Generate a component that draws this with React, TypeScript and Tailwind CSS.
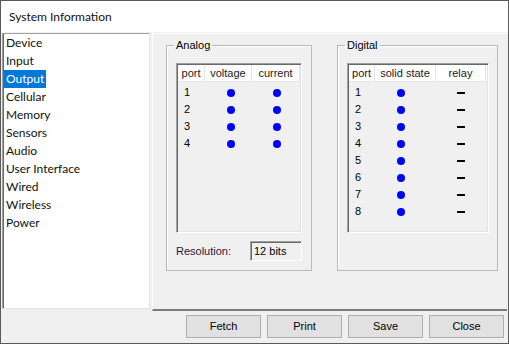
const MENU = [
  "Device",
  "Input",
  "Output",
  "Cellular",
  "Memory",
  "Sensors",
  "Audio",
  "User Interface",
  "Wired",
  "Wireless",
  "Power",
];

const ANALOG = [1, 2, 3, 4];
const DIGITAL = [1, 2, 3, 4, 5, 6, 7, 8];

function Dot() {
  return <span className="block h-[8px] w-[8px] rounded-full bg-[#0000ff]" />;
}

function Dash() {
  return <span className="block h-[2px] w-[8px] bg-black" />;
}

function HeaderCell({ label, width }: { label: string; width: string }) {
  return (
    <div
      className={`${width} flex h-full items-center justify-center border-r border-[#e5e5e5] text-[#1a1a1a]`}
    >
      {label}
    </div>
  );
}

function ListView({
  width,
  columns,
  rows,
  relayDash,
}: {
  width: string;
  columns: { label: string; width: string }[];
  rows: number[];
  relayDash?: boolean;
}) {
  return (
    <div
      className={`${width} h-[170px] border border-t-[#a0a0a0] border-l-[#a0a0a0] border-r-white border-b-white bg-[#f0f0f0] p-[1px] shadow-[inset_1px_1px_0_#696969,inset_-1px_-1px_0_#e3e3e3]`}
    >
      <div className="flex h-[17px] border-b border-[#e5e5e5] bg-white">
        {columns.map((c) => (
          <HeaderCell key={c.label} label={c.label} width={c.width} />
        ))}
      </div>
      <div className="pt-[2px]">
        {rows.map((n) => (
          <div key={n} className="flex h-[17px] items-center">
            <div className={`${columns[0].width} pl-[6px]`}>{n}</div>
            <div className={`${columns[1].width} pl-[22px]`}>
              <Dot />
            </div>
            <div className={`${columns[2].width} pl-[21px]`}>
              {relayDash ? <Dash /> : <Dot />}
            </div>
          </div>
        ))}
      </div>
    </div>
  );
}

function Button({ label }: { label: string }) {
  return (
    <button
      type="button"
      className="flex h-[23px] w-[75px] items-center justify-center border border-[#adadad] bg-[#e1e1e1] text-[11px] text-black"
    >
      {label}
    </button>
  );
}

export default function App() {
  return (
    <div className="flex h-[344px] w-[509px] flex-col border border-[#5a5a5a] bg-[#f0f0f0] font-['Liberation_Sans',Arial,sans-serif] text-[11px] leading-[13px] text-black">
      <div className="flex h-[31px] items-center bg-white pl-[8px] pb-[1px] font-['Lato',sans-serif] text-[12px] text-[#111]">
        System Information
      </div>

      <div className="flex items-start gap-[2px] pl-[1px] pr-[1px] pt-[1px]">
        <div className="h-[276px] w-[148px] border border-t-[#a0a0a0] border-l-[#a0a0a0] border-r-[#e3e3e3] border-b-[#e3e3e3] bg-white shadow-[inset_1px_0_0_#696969] font-['Lato',sans-serif] text-[12px]">
          <ul className="pl-[1px]">
            {MENU.map((item) => (
              <li key={item} className="flex h-[18px] items-center">
                <span
                  className={
                    item === "Output"
                      ? "bg-[#0078d7] px-[2px] leading-[18px] text-white"
                      : "px-[2px] leading-[18px] text-[#111]"
                  }
                >
                  {item}
                </span>
              </li>
            ))}
          </ul>
        </div>

        <div className="flex h-[278px] flex-1 items-start gap-[25px] border-l border-t border-b-2 border-l-white border-t-white border-b-[#7a7a7a] pl-[13px] pt-[5px]">
          <fieldset className="h-[232px] w-[146px] border border-[#b9b9b9] shadow-[inset_1px_1px_0_#fff]">
            <legend className="ml-[7px] px-[2px] leading-[13px]">Analog</legend>
            <div className="pl-[9px] pt-[11px]">
              <ListView
                width="w-[126px]"
                rows={ANALOG}
                columns={[
                  { label: "port", width: "w-[27px]" },
                  { label: "voltage", width: "w-[47px]" },
                  { label: "current", width: "w-[48px]" },
                ]}
              />
              <div className="mt-[8px] flex h-[20px] items-center">
                <span className="w-[74px] text-[#1a1a3a]">Resolution:</span>
                <div className="flex h-[20px] w-[52px] items-center border border-t-[#a0a0a0] border-l-[#a0a0a0] border-r-white border-b-white pl-[3px] shadow-[inset_1px_1px_0_#696969]">
                  12 bits
                </div>
              </div>
            </div>
          </fieldset>

          <fieldset className="h-[232px] w-[161px] border border-[#b9b9b9] shadow-[inset_1px_1px_0_#fff]">
            <legend className="ml-[7px] px-[2px] leading-[13px]">Digital</legend>
            <div className="pl-[9px] pt-[11px]">
              <ListView
                width="w-[142px]"
                rows={DIGITAL}
                relayDash
                columns={[
                  { label: "port", width: "w-[26px]" },
                  { label: "solid state", width: "w-[61px]" },
                  { label: "relay", width: "w-[50px]" },
                ]}
              />
            </div>
          </fieldset>
        </div>
      </div>

      <div className="flex flex-1 items-start justify-end gap-[6px] pr-[4px] pt-[4px]">
        <Button label="Fetch" />
        <Button label="Print" />
        <Button label="Save" />
        <Button label="Close" />
      </div>
    </div>
  );
}
